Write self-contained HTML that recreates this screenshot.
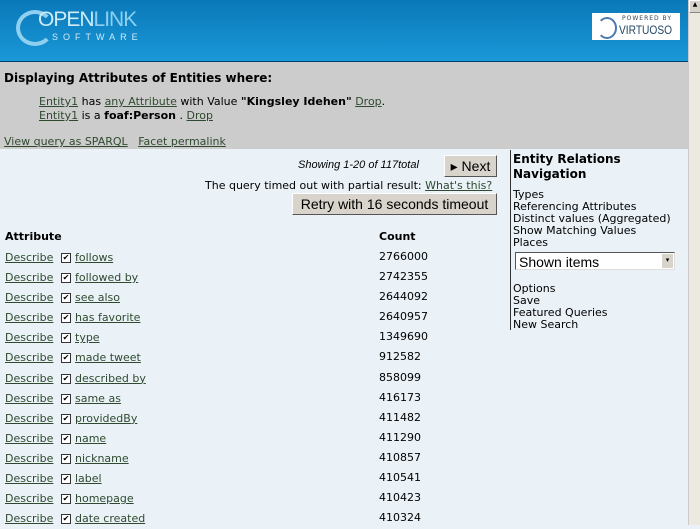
<!DOCTYPE html>
<html><head><meta charset="utf-8"><style>
body{margin:0;width:700px;height:525px;overflow:hidden;font-family:"DejaVu Sans","Liberation Sans",sans-serif;font-size:11px;background:#eaf2f8;position:relative;color:#000}
a{color:#2f4a2f;text-decoration:underline}
.abs{position:absolute;white-space:nowrap}
#hdr{position:absolute;left:0;top:0;width:688px;height:61px;background:linear-gradient(#0a78b8,#1a98d8);border-bottom:1px solid #05406a}
#gray{position:absolute;left:0;top:62px;width:688px;height:87px;background:#cccccc}
#sb{position:absolute;left:688px;top:0;width:12px;height:525px;background:#ece9e0;border-left:1px solid #ccc}
.btn{position:absolute;background:#d8d4cc;border:1px solid;border-color:#fff #555 #555 #fff;font-family:"Liberation Sans",sans-serif;font-size:14px;text-align:center;line-height:20px}
.cb{display:inline-block;width:8px;height:8px;border:1px solid #333;background:#fff;font-size:8px;line-height:8px;vertical-align:1px;margin-right:4px;text-align:center}
</style></head><body>
<div id="hdr">
 <div class="abs" style="left:16px;top:10px;width:30px;height:28px;border-radius:50%;border:4px solid #8fd0f0;border-right-color:transparent"></div>
 <div class="abs" style="left:38px;top:8px;font-family:'Liberation Sans';font-size:21px;color:#cdebf8;letter-spacing:-1px">OPEN<span style="color:#8fd0f0">LINK</span></div>
 <div class="abs" style="left:52px;top:32px;font-family:'Liberation Sans';font-size:9px;color:#cdebf8;letter-spacing:5px">SOFTWARE</div>
 <div class="abs" style="left:592px;top:13px;width:88px;height:27px;background:#fff">
  <div class="abs" style="left:30px;top:2px;font-size:6px;color:#345;letter-spacing:1px">POWERED BY</div>
  <div class="abs" style="left:27px;top:10px;font-family:'Liberation Sans';font-size:12px;color:#246;transform:scaleX(0.85);transform-origin:left">VIRTUOSO</div>
  <div class="abs" style="left:5px;top:4px;width:16px;height:18px;border-radius:50%;border:2px solid #4a7ab0;border-left-color:transparent"></div>
 </div>
</div>
<div id="gray">
 <div class="abs" style="left:4px;top:9px;font-weight:bold;font-size:12px">Displaying Attributes of Entities where:</div>
 <div class="abs" style="left:39px;top:33px"><a>Entity1</a> has <a>any Attribute</a> with Value <b>"Kingsley Idehen"</b> <a>Drop</a>.</div>
 <div class="abs" style="left:39px;top:47px"><a>Entity1</a> is a <b>foaf:Person</b> . <a>Drop</a></div>
 <div class="abs" style="left:4px;top:73px"><a>View query as SPARQL</a> &nbsp; <a>Facet permalink</a></div>
</div>
<div class="abs" style="left:298px;top:159px;font-style:italic;font-family:'Liberation Sans';font-size:11px">Showing 1-20 of 117total</div>
<div class="btn" style="left:444px;top:155px;width:51px">▸ Next</div>
<div class="abs" style="left:205px;top:179px">The query timed out with partial result: <a>What's this?</a></div>
<div class="btn" style="left:292px;top:193px;width:203px">Retry with 16 seconds timeout</div>
<div class="abs" style="left:510px;top:150px;width:1px;height:180px;background:#333"></div>
<div class="abs" style="left:513px;top:152px;font-weight:bold;font-size:12px;line-height:15px">Entity Relations<br>Navigation</div>
<div class="abs" style="left:513px;top:189px;line-height:12px">Types<br>Referencing Attributes<br>Distinct values (Aggregated)<br>Show Matching Values<br>Places</div>
<div class="abs" style="left:515px;top:252px;width:160px;height:18px;background:#fff;border:1px solid;border-color:#555 #ddd #ddd #555;font-family:'Liberation Sans';font-size:14px;line-height:18px;padding-left:3px;box-sizing:border-box">Shown items<div class="abs" style="right:1px;top:1px;width:11px;height:14px;background:#d8d4cc;font-size:7px;line-height:14px;text-align:center">▾</div></div>
<div class="abs" style="left:513px;top:283px;line-height:12px">Options<br>Save<br>Featured Queries<br>New Search</div>
<div class="abs" style="left:5px;top:230px;font-weight:bold">Attribute</div>
<div class="abs" style="left:379px;top:230px;font-weight:bold">Count</div>
<div id="sb"><div style="height:11px;border:1px solid;border-color:#fff #888 #888 #fff;background:#d8d4cc;font-size:6px;text-align:center">▲</div></div>
<div class="abs" style="left:5px;top:248px;line-height:20.1px">
<a>Describe</a><br><a>Describe</a><br><a>Describe</a><br><a>Describe</a><br><a>Describe</a><br><a>Describe</a><br><a>Describe</a><br><a>Describe</a><br><a>Describe</a><br><a>Describe</a><br><a>Describe</a><br><a>Describe</a><br><a>Describe</a><br><a>Describe</a>
</div>
<div class="abs" style="left:61px;top:248px;line-height:20.1px">
<span class="cb">✔</span><a>follows</a><br><span class="cb">✔</span><a>followed by</a><br><span class="cb">✔</span><a>see also</a><br><span class="cb">✔</span><a>has favorite</a><br><span class="cb">✔</span><a>type</a><br><span class="cb">✔</span><a>made tweet</a><br><span class="cb">✔</span><a>described by</a><br><span class="cb">✔</span><a>same as</a><br><span class="cb">✔</span><a>providedBy</a><br><span class="cb">✔</span><a>name</a><br><span class="cb">✔</span><a>nickname</a><br><span class="cb">✔</span><a>label</a><br><span class="cb">✔</span><a>homepage</a><br><span class="cb">✔</span><a>date created</a>
</div>
<div class="abs" style="left:379px;top:247px;line-height:20.1px">
2766000<br>2742355<br>2644092<br>2640957<br>1349690<br>912582<br>858099<br>416173<br>411482<br>411290<br>410857<br>410541<br>410423<br>410324
</div>
</body></html>
